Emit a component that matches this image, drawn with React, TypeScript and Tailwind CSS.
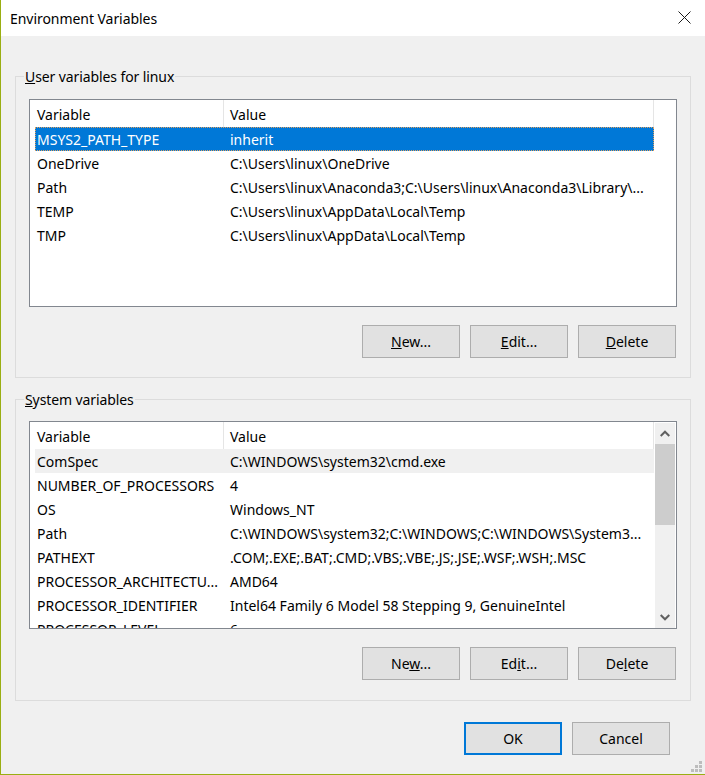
const font = "[font-family:'Noto_Sans','Open_Sans',sans-serif]";

type Row = [string, string];

const userRows: Row[] = [
  ["MSYS2_PATH_TYPE", "inherit"],
  ["OneDrive", "C:\\Users\\linux\\OneDrive"],
  ["Path", "C:\\Users\\linux\\Anaconda3;C:\\Users\\linux\\Anaconda3\\Library\\..."],
  ["TEMP", "C:\\Users\\linux\\AppData\\Local\\Temp"],
  ["TMP", "C:\\Users\\linux\\AppData\\Local\\Temp"],
];

const systemRows: Row[] = [
  ["ComSpec", "C:\\WINDOWS\\system32\\cmd.exe"],
  ["NUMBER_OF_PROCESSORS", "4"],
  ["OS", "Windows_NT"],
  ["Path", "C:\\WINDOWS\\system32;C:\\WINDOWS;C:\\WINDOWS\\System3..."],
  ["PATHEXT", ".COM;.EXE;.BAT;.CMD;.VBS;.VBE;.JS;.JSE;.WSF;.WSH;.MSC"],
  ["PROCESSOR_ARCHITECTU...", "AMD64"],
  ["PROCESSOR_IDENTIFIER", "Intel64 Family 6 Model 58 Stepping 9, GenuineIntel"],
  ["PROCESSOR_LEVEL", "6"],
];

function Button({ children, primary }: { children: React.ReactNode; primary?: boolean }) {
  return (
    <div
      className={`w-[98px] h-[33px] flex items-center justify-center bg-[#e1e1e1] text-[14px] text-black ${
        primary ? "border-[2px] border-[#0078d7]" : "border border-[#adadad]"
      }`}
    >
      <span>{children}</span>
    </div>
  );
}

function ListRow({ row, mode }: { row: Row; mode: "selected" | "hover" | "plain" }) {
  const cls =
    mode === "selected"
      ? "bg-[#0078d7] text-white border border-dotted border-[#e0a060]"
      : mode === "hover"
      ? "bg-[#f0f0f0] text-black border border-transparent"
      : "text-black border border-transparent";
  return (
    <div className={`flex h-[24px] shrink-0 w-[619px] items-center text-[14px] whitespace-nowrap ${cls}`}>
      <div className="w-[194px] pl-[1px]">{row[0]}</div>
      <div>{row[1]}</div>
    </div>
  );
}

function Header() {
  return (
    <div className="flex h-[27px] shrink-0 w-[619px] pl-[1px] text-[14px] text-black">
      <div className="w-[188px] pl-[1px] pt-[2px] flex items-center border-r border-[#e5e5e5]">Variable</div>
      <div className="w-[430px] pl-[6px] pt-[2px] flex items-center border-r border-[#e5e5e5]">Value</div>
    </div>
  );
}

function Scrollbar() {
  return (
    <div className="absolute right-[1px] top-[1px] bottom-0 w-[20px] bg-[#f0f0f0] flex flex-col items-center">
      <div className="h-[21px] w-full flex items-center justify-center shrink-0">
        <svg width="10" height="7" viewBox="0 0 10 7">
          <path d="M0.7 6 L5 1.7 L9.3 6" fill="none" stroke="#606060" strokeWidth="2" />
        </svg>
      </div>
      <div className="h-[81px] w-full bg-[#cdcdcd] shrink-0" />
      <div className="flex-1" />
      <div className="h-[21px] w-full flex items-center justify-center shrink-0">
        <svg width="10" height="7" viewBox="0 0 10 7">
          <path d="M0.7 1 L5 5.3 L9.3 1" fill="none" stroke="#606060" strokeWidth="2" />
        </svg>
      </div>
    </div>
  );
}

function Group({
  label,
  rows,
  first,
  scroll,
  buttons,
  pad,
}: {
  label: React.ReactNode;
  rows: Row[];
  first: "selected" | "hover";
  scroll?: boolean;
  buttons: React.ReactNode;
  pad: string;
}) {
  return (
    <div className={`relative h-[302px] border border-[#dcdcdc] pl-[13px] pr-[13px] ${pad}`}>
      <div className="absolute left-[8px] top-[-12px] px-[1px] bg-[#f0f0f0] text-[14px] leading-[24px] tracking-[-0.1px] text-black">
        {label}
      </div>
      <div className="relative h-[208px] border border-[#82878f] bg-white overflow-hidden pl-[5px] flex flex-col">
        <Header />
        {rows.map((r, i) => (
          <ListRow key={r[0]} row={r} mode={i === 0 ? first : "plain"} />
        ))}
        {scroll && <Scrollbar />}
      </div>
      <div className="flex justify-end gap-[10px] mt-[18px] pr-[1px]">{buttons}</div>
    </div>
  );
}

export default function App() {
  return (
    <div className={`w-[705px] h-[775px] flex flex-col bg-[#f0f0f0] border-l border-b border-[#9aae12] relative ${font}`}>
      <div className="h-[36px] shrink-0 bg-white flex items-center justify-between pl-[9px] pr-[14px] text-[14px] tracking-[-0.05px] text-black">
        <span>Environment Variables</span>
        <svg className="mb-[2px]" width="13" height="13" viewBox="0 0 13 13">
          <path d="M0.5 0.5 L12.5 12.5 M12.5 0.5 L0.5 12.5" stroke="#1a1a1a" strokeWidth="1" fill="none" />
        </svg>
      </div>
      <div className="flex flex-col pl-[14px] pr-[14px] pt-[40px]">
        <Group
          pad="pt-[22px]"
          first="selected"
          rows={userRows}
          label={
            <span>
              <u>U</u>ser variables for linux
            </span>
          }
          buttons={
            <>
              <Button>
                <u>N</u>ew...
              </Button>
              <Button>
                <u>E</u>dit...
              </Button>
              <Button>
                <u>D</u>elete
              </Button>
            </>
          }
        />
        <div className="h-[21px]" />
        <Group
          pad="pt-[21px]"
          first="hover"
          scroll
          rows={systemRows}
          label={
            <span>
              <u>S</u>ystem variables
            </span>
          }
          buttons={
            <>
              <Button>
                Ne<u>w</u>...
              </Button>
              <Button>
                Ed<u>i</u>t...
              </Button>
              <Button>
                De<u>l</u>ete
              </Button>
            </>
          }
        />
      </div>
      <div className="flex justify-end gap-[10px] pr-[35px] mt-[21px]">
        <Button primary>OK</Button>
        <Button>Cancel</Button>
      </div>
      <svg className="absolute right-[3px] bottom-[2px]" width="11" height="11" viewBox="0 0 11 11">
        <g fill="#bdbdbd">
          <rect x="8" y="0" width="3" height="3" />
          <rect x="4" y="4" width="3" height="3" />
          <rect x="8" y="4" width="3" height="3" />
          <rect x="0" y="8" width="3" height="3" />
          <rect x="4" y="8" width="3" height="3" />
          <rect x="8" y="8" width="3" height="3" />
        </g>
      </svg>
    </div>
  );
}
